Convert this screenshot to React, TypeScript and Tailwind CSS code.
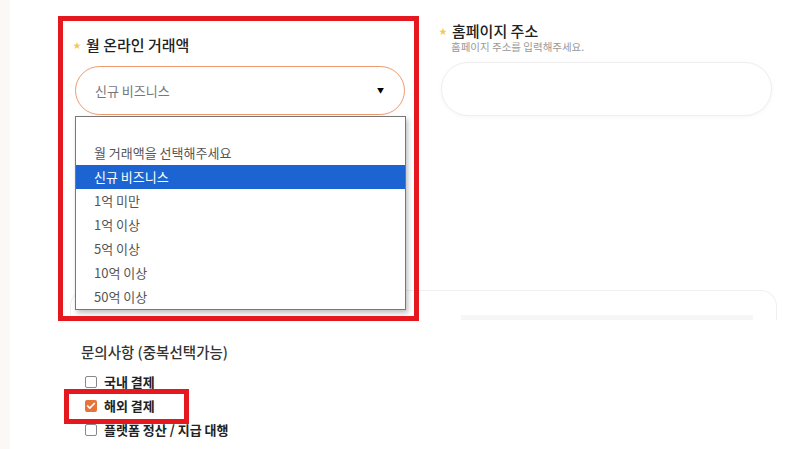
import { Check } from 'lucide-react';

const options = ['월 거래액을 선택해주세요', '신규 비즈니스', '1억 미만', '1억 이상', '5억 이상', '10억 이상', '50억 이상'];

const inquiries = [
  { label: '국내 결제', checked: false },
  { label: '해외 결제', checked: true },
  { label: '플랫폼 정산 / 지급 대행', checked: false },
];

const Star = () => <span className="mr-[5px] text-[8px] leading-none text-[#f5c84c]">★</span>;

const App = () => {
  return (
    <div className="relative flex h-[449px] w-[803px] overflow-hidden bg-white font-['Noto_Sans_CJK_KR','Noto_Sans',sans-serif] text-[#222]">
      <div className="w-[10px] shrink-0 bg-[#fbf8f6]" />

      <div className="flex-1 pl-[65px]">
        <div className="flex items-start">
          {/* 월 온라인 거래액 */}
          <div className="mt-[36px] w-[330px]">
            <div className="ml-[-2px] flex h-[18px] items-center">
              <Star />
              <span className="text-[15px] font-medium">월 온라인 거래액</span>
            </div>
            <div className="mt-[12px] flex h-[49px] items-center justify-between rounded-full border border-[#ef9a6e] pl-[19px] pr-[20px]">
              <span className="text-[13px] text-[#777]">신규 비즈니스</span>
              <span className="text-[7px] text-black">▼</span>
            </div>
          </div>

          {/* 홈페이지 주소 */}
          <div className="ml-[36px] mt-[22px] w-[331px]">
            <div className="ml-[-2px] flex h-[18px] items-center">
              <Star />
              <span className="text-[15px] font-medium">홈페이지 주소</span>
            </div>
            <p className="h-[14px] pl-[10px] text-[10.5px] leading-[14px] text-[#999]">홈페이지 주소를 입력해주세요.</p>
            <div className="mt-[8px] h-[54px] rounded-full border border-[#eeeeee] bg-white shadow-[0_1px_4px_rgba(0,0,0,0.04)]" />
          </div>
        </div>

        {/* card peeking below */}
        <div className="ml-[-5px] mt-[174px] flex h-[30px] w-[707px] items-end rounded-t-[16px] border border-b-0 border-[#f0f0f0] pl-[390px]">
          <div className="h-[5px] w-[292px] bg-[#f6f6f6]" />
        </div>

        {/* 문의사항 */}
        <div className="ml-[6px] mt-[22px]">
          <p className="h-[20px] text-[14.5px] font-medium leading-[20px] text-[#333]">문의사항 (중복선택가능)</p>
          <div className="mt-[8px] flex flex-col">
            {inquiries.map((item) => (
              <div key={item.label} className="flex h-[24px] items-center pl-[4px]">
                {item.checked ? (
                  <span className="flex h-[12px] w-[12px] items-center justify-center rounded-[2px] bg-[#e8733a]">
                    <Check className="h-[10px] w-[10px] text-white" strokeWidth={4} />
                  </span>
                ) : (
                  <span className="h-[12px] w-[12px] rounded-[2px] border border-[#888] bg-white" />
                )}
                <span className="ml-[7px] text-[13px] font-bold text-[#222]">{item.label}</span>
              </div>
            ))}
          </div>
        </div>
      </div>

      {/* open dropdown list */}
      <div className="absolute left-[75px] top-[116px] w-[331px] border border-[#777] bg-white pt-[24px] shadow-[2px_3px_5px_rgba(0,0,0,0.25)]">
        {options.map((opt) => (
          <div
            key={opt}
            className={
              opt === '신규 비즈니스'
                ? 'flex h-[24px] items-center bg-[#1c64d1] pl-[18px] text-[13px] text-white'
                : 'flex h-[24px] items-center pl-[18px] text-[13px] text-[#555]'
            }
          >
            {opt}
          </div>
        ))}
      </div>

      {/* red annotation boxes */}
      <div className="absolute left-[58px] top-[16px] h-[305px] w-[361px] border-[5px] border-[#e5171f]" />
      <div className="absolute left-[64px] top-[389px] h-[35px] w-[125px] border-[5px] border-[#e5171f]" />
    </div>
  );
};

export default App;
